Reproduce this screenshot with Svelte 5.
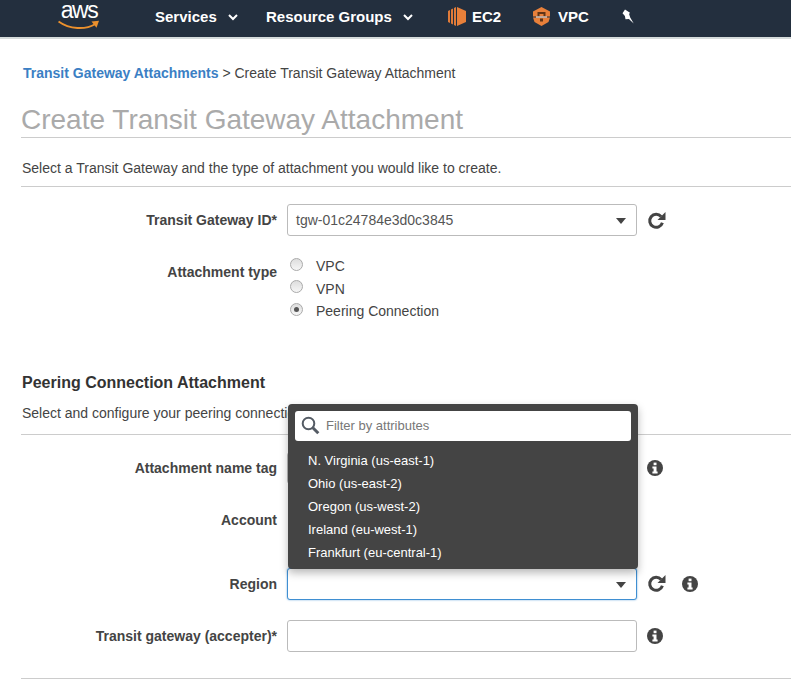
<script>
	const regions = [
		'N. Virginia (us-east-1)',
		'Ohio (us-east-2)',
		'Oregon (us-west-2)',
		'Ireland (eu-west-1)',
		'Frankfurt (eu-central-1)'
	];
	const types = ['VPC', 'VPN', 'Peering Connection'];
</script>

{#snippet refresh()}
	<svg class="refresh" width="19" height="19" viewBox="0 0 19 19">
		<path d="M15.400 11.800a6.500 6.500 0 1 1-1.300-6.300" fill="none" stroke="#444" stroke-width="3" />
		<path d="M18.500 1v8h-8z" fill="#444" />
	</svg>
{/snippet}

{#snippet info()}
	<svg class="info" width="16" height="16" viewBox="0 0 16 16">
		<circle cx="8" cy="8" r="8" fill="#444" />
		<rect x="6.600" y="2.600" width="2.900" height="2.600" fill="#fff" />
		<path d="M5.400 6.400h4.100v5.100h1.100v2H5.400v-2h1.200V8.400H5.400z" fill="#fff" />
	</svg>
{/snippet}

<header class="topbar">
	<div class="logo">
		<span class="logo-text">aws</span>
		<svg width="42" height="10" viewBox="0 0 42 10">
			<path d="M0.500 1.500c11 8 27 8.500 37 2.500" fill="none" stroke="#ec912d" stroke-width="2" />
			<path d="M33.500 1.500l7.500-.8-2.500 7z" fill="#ec912d" />
		</svg>
	</div>
	<nav class="nav">
		<span class="nav-item services">Services<svg class="chev" width="10" height="7" viewBox="0 0 10 7"><path d="M1 1l4 4 4-4" fill="none" stroke="#fff" stroke-width="2" /></svg></span>
		<span class="nav-item groups">Resource Groups<svg class="chev" width="10" height="7" viewBox="0 0 10 7"><path d="M1 1l4 4 4-4" fill="none" stroke="#fff" stroke-width="2" /></svg></span>
		<span class="nav-item ec2">
			<svg width="18" height="19" viewBox="0 0 18 19">
				<path d="M0 4l2-1v13l-2-1zM3 2.500l2-1v16l-2-1zM6 1l2-1v19l-2-1z" fill="#e07b39" />
				<path d="M9 0l9 4v11l-9 4z" fill="#e8803a" />
			</svg>
			EC2
		</span>
		<span class="nav-item vpc">
			<svg width="19" height="19" viewBox="0 0 19 19">
				<path d="M1 4.500l8.500-4.500 8.500 4.500v5h-17z" fill="#e8803a" />
				<path d="M5.500 9.500v-4.500h8v4.500h-2v-2.500h-4v2.500z" fill="#5f3417" />
				<path d="M1 10.500h17l-1.500 4.500-7 4-7-4z" fill="#e8803a" />
				<path d="M4 10h11" stroke="#fff" stroke-width="1" />
				<path d="M8 11.500h3v3h-3z" fill="#5f3417" />
			</svg>
			VPC
		</span>
		<svg class="pin" width="12" height="15" viewBox="0 0 12 15">
			<path d="M3 .500l5 3.200-.9 1.300 1.100 3.500 3.500 6-4.800-4.600-3.400.4-.6-3.400-2.400-2.700z" fill="#fff" />
		</svg>
	</nav>
</header>

<main class="page">
	<p class="crumbs"><a href="#top">Transit Gateway Attachments</a> &gt; Create Transit Gateway Attachment</p>
	<h1>Create Transit Gateway Attachment</h1>
	<p class="intro">Select a Transit Gateway and the type of attachment you would like to create.</p>

	<div class="row first">
		<span class="label">Transit Gateway ID*</span>
		<div class="select">tgw-01c24784e3d0c3845<span class="caret"></span></div>
		{@render refresh()}
	</div>

	<div class="row types">
		<span class="label">Attachment type</span>
		<div class="radios">
			{#each types as t}
				<div class="radio-line">
					<span class="radio" class:on={t === 'Peering Connection'}></span>
					<span>{t}</span>
				</div>
			{/each}
		</div>
	</div>

	<h2>Peering Connection Attachment</h2>
	<p class="intro section">Select and configure your peering connection attachment.</p>

	<div class="peering">
		<div class="row tag">
			<span class="label">Attachment name tag</span>
			<div class="input"></div>
			{@render info()}
		</div>
		<div class="row account">
			<span class="label">Account</span>
		</div>
		<div class="row region">
			<span class="label">Region</span>
			<div class="select focus"><span class="caret"></span></div>
			{@render refresh()}
			<span class="wide">{@render info()}</span>
		</div>
		<div class="row accepter">
			<span class="label">Transit gateway (accepter)*</span>
			<div class="input"></div>
			{@render info()}
		</div>

		<div class="menu">
			<div class="filter">
				<svg width="19" height="19" viewBox="0 0 19 19">
					<circle cx="7.500" cy="7.500" r="5.800" fill="none" stroke="#545b64" stroke-width="2" />
					<path d="M11.800 11.800l5.500 5.500" stroke="#545b64" stroke-width="3" />
				</svg>
				<span>Filter by attributes</span>
			</div>
			<ul>
				{#each regions as r}
					<li>{r}</li>
				{/each}
			</ul>
		</div>
	</div>
	<div class="end"></div>
</main>

<style>
	:global(body) {
		margin: 0;
		background: #fff;
		overflow: hidden;
		font-family: "Liberation Sans", Arial, sans-serif;
		font-size: 14px;
		color: #444;
	}

	.topbar {
		display: flex;
		align-items: flex-start;
		height: 37px;
		background: #232f3e;
		border-bottom: 2px solid #d5dbdb;
		color: #fff;
		font-size: 15px;
		font-weight: bold;
	}

	.logo {
		display: flex;
		flex-direction: column;
		align-items: center;
		width: 42px;
		margin: 0 0 0 58px;
	}

	.logo-text {
		font-size: 23px;
		font-weight: normal;
		line-height: 20px;
		letter-spacing: -1.500px;
	}

	.nav {
		display: flex;
		align-items: center;
		height: 33px;
		margin-left: 55px;
	}

	.nav-item {
		display: flex;
		align-items: center;
		white-space: nowrap;
	}

	.chev {
		margin: 2px 0 0 11px;
	}

	.services {
		width: 111px;
	}

	.groups {
		width: 182px;
	}

	.ec2 {
		width: 84px;
		gap: 6px;
	}

	.vpc {
		width: 90px;
		gap: 7px;
	}

	.page {
		padding-left: 21px;
	}

	.crumbs {
		margin: 0;
		padding: 26px 0 0 2px;
		line-height: 16px;
	}

	.crumbs a {
		color: #3b7fc4;
		font-weight: bold;
		text-decoration: none;
	}

	h1 {
		margin: 21px 0 0;
		height: 35px;
		border-bottom: 1px solid #ccc;
		font-size: 28px;
		font-weight: normal;
		line-height: 35px;
		color: #aaa;
	}

	.intro {
		margin: 0;
		padding: 22px 0 0 1px;
		height: 26px;
		line-height: 16px;
		border-bottom: 1px solid #ccc;
	}

	.row {
		display: flex;
		align-items: center;
		position: relative;
	}

	.label {
		flex: none;
		width: 256px;
		margin-right: 10px;
		text-align: right;
		font-weight: bold;
		white-space: nowrap;
	}

	.first {
		margin-top: 17px;
		height: 32px;
	}

	.select,
	.input {
		flex: none;
		box-sizing: border-box;
		position: relative;
		width: 350px;
		height: 32px;
		padding-left: 8px;
		border: 1px solid #bbb;
		border-radius: 3px;
		line-height: 30px;
		background: #fff;
		color: #555;
	}

	.focus {
		border-color: #3f8fd2;
		box-shadow: 0 0 2px #6aa9dd;
	}

	.caret {
		position: absolute;
		top: 13px;
		right: 10px;
		border: 5px solid transparent;
		border-top: 6px solid #444;
		border-bottom: 0;
	}

	.refresh {
		margin-left: 10px;
	}

	.info {
		display: block;
		margin-left: 10px;
	}

	.wide {
		margin-left: 6px;
	}

	.types {
		align-items: flex-start;
		margin-top: 20px;
	}

	.types .label {
		line-height: 32px;
		height: 32px;
	}

	.radios {
		display: flex;
		flex-direction: column;
		margin: -1px 0 0 3px;
	}

	.radio-line {
		display: flex;
		align-items: center;
		height: 22.500px;
		gap: 13px;
	}

	.radio {
		box-sizing: border-box;
		position: relative;
		top: -2px;
		width: 13px;
		height: 13px;
		border: 1px solid #aaa;
		border-radius: 50%;
		background: linear-gradient(#ddd, #f6f6f6);
	}

	.radio.on::after {
		content: '';
		position: absolute;
		left: 3px;
		top: 3px;
		width: 5px;
		height: 5px;
		border-radius: 50%;
		background: #555;
	}

	h2 {
		margin: 50px 0 0 1px;
		font-size: 16px;
		line-height: 20px;
		color: #333;
	}

	.intro.section {
		padding-top: 12px;
		height: 29px;
	}

	.peering {
		position: relative;
		height: 243px;
	}

	.tag {
		position: absolute;
		top: 17px;
		left: 0;
		right: 0;
	}

	.account {
		position: absolute;
		top: 69px;
		left: 0;
		right: 0;
		height: 32px;
	}

	.region {
		position: absolute;
		top: 133px;
		left: 0;
		right: 0;
	}

	.accepter {
		position: absolute;
		top: 185px;
		left: 0;
		right: 0;
	}

	.menu {
		position: absolute;
		top: -31px;
		left: 267px;
		width: 350px;
		height: 165px;
		background: #444;
		border-radius: 4px;
		box-shadow: 0 4px 8px rgba(0, 0, 0, 0.28);
		color: #fff;
		font-size: 13px;
	}

	.filter {
		display: flex;
		align-items: center;
		gap: 6px;
		height: 30px;
		margin: 7px 7px 0;
		padding-left: 6px;
		background: #fff;
		border-radius: 3px;
		color: #777;
	}

	ul {
		list-style: none;
		margin: 8px 0 0;
		padding: 0 0 0 20px;
	}

	li {
		height: 23px;
		line-height: 23px;
	}

	.end {
		border-top: 1px solid #ccc;
	}
</style>
